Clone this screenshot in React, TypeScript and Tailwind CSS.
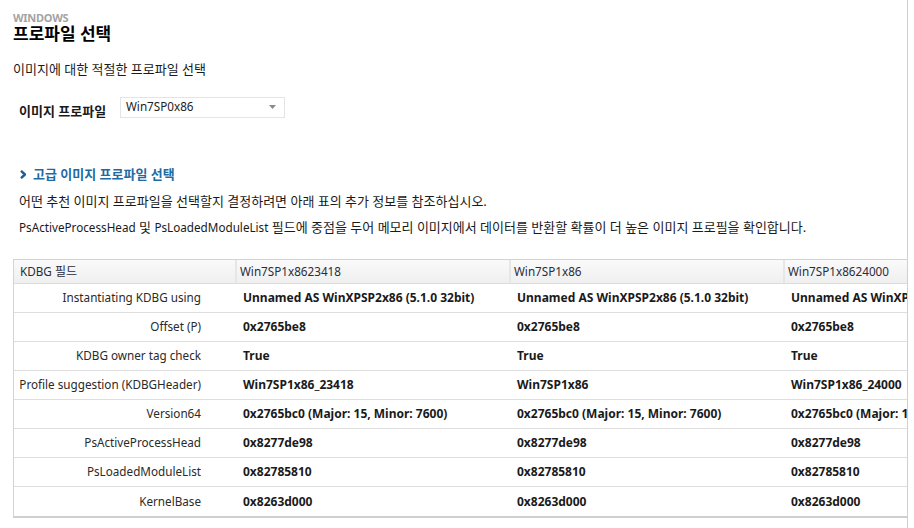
import React from "react";

// 프로파일 선택 화면

const font = { fontFamily: '"Noto Sans", "Noto Sans CJK KR", sans-serif' };

const columns = ["Win7SP1x8623418", "Win7SP1x86", "Win7SP1x8624000"];

const rows: { label: string; values: string[] }[] = [
  {
    label: "Instantiating KDBG using",
    values: [
      "Unnamed AS WinXPSP2x86 (5.1.0 32bit)",
      "Unnamed AS WinXPSP2x86 (5.1.0 32bit)",
      "Unnamed AS WinXPSP2x86 (5.1.0 32bit)",
    ],
  },
  { label: "Offset (P)", values: ["0x2765be8", "0x2765be8", "0x2765be8"] },
  { label: "KDBG owner tag check", values: ["True", "True", "True"] },
  {
    label: "Profile suggestion (KDBGHeader)",
    values: ["Win7SP1x86_23418", "Win7SP1x86", "Win7SP1x86_24000"],
  },
  {
    label: "Version64",
    values: [
      "0x2765bc0 (Major: 15, Minor: 7600)",
      "0x2765bc0 (Major: 15, Minor: 7600)",
      "0x2765bc0 (Major: 15, Minor: 7600)",
    ],
  },
  { label: "PsActiveProcessHead", values: ["0x8277de98", "0x8277de98", "0x8277de98"] },
  { label: "PsLoadedModuleList", values: ["0x82785810", "0x82785810", "0x82785810"] },
  { label: "KernelBase", values: ["0x8263d000", "0x8263d000", "0x8263d000"] },
];

// 라틴 문자는 조금 작게
function L({ children }: { children: React.ReactNode }) {
  return <span className="text-[11.7px]">{children}</span>;
}

export default function App() {
  return (
    <div className="w-[914px] h-[528px] bg-white flex overflow-hidden text-[13px] text-[#1a1a1a]" style={font}>
      <div className="w-[908px] shrink-0 border-r border-[#d0d0d0] overflow-hidden">
        {/* 제목 */}
        <div className="pl-[13px] pt-[11px]">
          <div className="text-[11px] font-bold leading-[13px] text-[#a3a3a3] tracking-tight">WINDOWS</div>
          <div className="text-[17px] font-bold leading-[20px] text-black">프로파일 선택</div>
          <div className="mt-[17px] leading-[16px]">이미지에 대한 적절한 프로파일 선택</div>
        </div>

        {/* 프로파일 드롭다운 */}
        <div className="flex items-center mt-[16px] pl-[19px]">
          <div className="w-[101px] font-bold pt-[9px]">이미지 프로파일</div>
          <div className="w-[165px] h-[21px] border border-[#e2e4e8] flex items-center justify-between pl-[5px] pr-[8px]">
            <span className="text-[11.7px] text-[#222]">Win7SP0x86</span>
            <svg width="7" height="4" viewBox="0 0 7 4">
              <polygon points="0,0 7,0 3.5,4" fill="#8a8a8a" />
            </svg>
          </div>
        </div>

        {/* 고급 */}
        <div className="flex items-center mt-[43px] pl-[20px] gap-[7px]">
          <svg width="6" height="9" viewBox="0 0 6 9">
            <path d="M1 0.8 L5 4.5 L1 8.2" stroke="#1a5f96" strokeWidth="2.4" fill="none" />
          </svg>
          <span className="font-semibold text-[#1f6aa3]">고급 이미지 프로파일 선택</span>
        </div>
        <div className="pl-[19px] mt-[9px] leading-[16px]">
          어떤 추천 이미지 프로파일을 선택할지 결정하려면 아래 표의 추가 정보를 참조하십시오.
        </div>
        <div className="pl-[19px] mt-[10px] leading-[16px]">
          <L>PsActiveProcessHead</L> 및 <L>PsLoadedModuleList</L> 필드에 중점을 두어 메모리 이미지에서 데이터를 반환할 확률이 더 높은 이미지 프로필을 확인합니다.
        </div>

        {/* KDBG 표 */}
        <div className="ml-[13px] mt-[24px] w-[1060px] border-t border-l border-[#d4d4d4] border-b-2 border-b-[#cfcfcf]">
          <div className="flex h-[24px] bg-gradient-to-b from-[#fafafa] to-[#efefef] border-b border-[#dcdcdc] text-[#2b2b3a]">
            <div className="w-[223px] pl-[6px] flex items-center border-r-2 border-[#e6e6e6] text-[12px]">
              <L>KDBG</L>&nbsp;필드
            </div>
            {columns.map((c) => (
              <div key={c} className="w-[274px] pl-[3px] flex items-center border-r-2 border-[#e6e6e6]">
                <L>{c}</L>
              </div>
            ))}
          </div>
          {rows.map((r, i) => (
            <div
              key={r.label}
              className={`flex h-[29px] ${i < rows.length - 1 ? "border-b border-[#dedede]" : ""}`}
            >
              <div className="w-[223px] pr-[36px] flex items-center justify-end text-[#2a2a2a]">
                <L>{r.label}</L>
              </div>
              {r.values.map((v, j) => (
                <div key={j} className="w-[274px] pl-[6px] flex items-center font-bold whitespace-nowrap text-[12px]">
                  {v}
                </div>
              ))}
            </div>
          ))}
        </div>
      </div>
    </div>
  );
}
